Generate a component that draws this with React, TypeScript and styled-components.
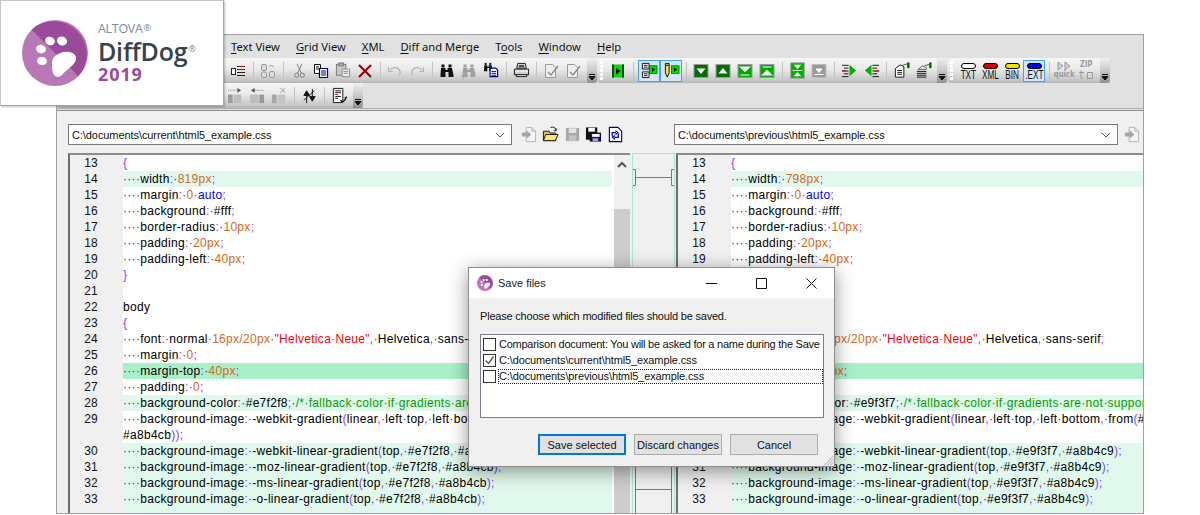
import { ReactNode } from 'react'
import styled, { createGlobalStyle } from 'styled-components'

const Global = createGlobalStyle`
  html, body {
    margin: 0;
    padding: 0;
    width: 1200px;
    height: 515px;
    overflow: hidden;
    background: #fff;
    font-family: 'Liberation Sans', Arial, sans-serif;
    font-size: 12px;
    color: #000;
  }
`

const Page = styled.div`
  position: relative;
  width: 1200px;
  height: 515px;
  padding: 34px 0 0 56px;
  box-sizing: border-box;
  overflow: hidden;
`

const AppWindow = styled.div`
  width: 1088px;
  height: 480px;
  box-sizing: border-box;
  border: 1px solid #a0a0a0;
  background: #e1e1e1;
  display: flex;
  flex-direction: column;
  overflow: hidden;
`

/* logo card */
const LogoCard = styled.div`
  position: absolute;
  left: 0;
  top: 0;
  width: 224px;
  height: 106px;
  box-sizing: border-box;
  background: #fff;
  border-right: 1px solid #a6a6a6;
  border-bottom: 1px solid #a6a6a6;
  border-top: 1px solid #c8c8c8;
  border-left: 1px solid #c8c8c8;
  box-shadow: 1px 1px 2px rgba(0, 0, 0, 0.25);
  display: flex;
  align-items: center;
  padding-left: 21px;
  gap: 10px;
  z-index: 5;
`

const LogoText = styled.div`
  display: flex;
  flex-direction: column;
  font-family: 'Open Sans', sans-serif;
  margin-top: -2px;
`

const Altova = styled.div`
  color: #7b89a8;
  font-size: 12.5px;
  line-height: 14px;
  letter-spacing: -0.3px;
  white-space: nowrap;
`

const DiffDogName = styled.div`
  color: #37424a;
  font-size: 25px;
  line-height: 30px;
  font-weight: 600;
  letter-spacing: -0.2px;
  white-space: nowrap;
`

const Reg = styled.span<{ $raise: number }>`
  font-size: 9px;
  font-weight: 400;
  color: #7c8790;
  line-height: 0;
  vertical-align: ${props => props.$raise}px;
  margin-left: 1px;
`

const LogoYear = styled.div`
  color: #9b4a9a;
  font-size: 18px;
  line-height: 16px;
  font-weight: 700;
  letter-spacing: 0.9px;
`

function PawMark ({ size }: { size: number }) {
  return (
    <svg width={size} height={size} viewBox='0 0 66 66'>
      <circle cx='33' cy='33' r='33' fill='#b878b5' />
      <path d='M9.7 9.7A33 33 0 0 1 56.3 56.3Z' fill='#9b4a9a' />
      <g fill='#fff'>
        <ellipse cx='28' cy='21' rx='5' ry='4.2' transform='rotate(25 28 21)' />
        <ellipse cx='40' cy='21' rx='5.2' ry='4.4' transform='rotate(25 40 21)' />
        <ellipse cx='19' cy='29' rx='5' ry='4.2' transform='rotate(15 19 29)' />
        <ellipse cx='20' cy='41' rx='5' ry='4' transform='rotate(10 20 41)' />
        <path d='M32 37C36 33 42 31 47 32C53 33 56 37 53 42C50 47 44 50 40 55C37 58 32 57 31 53C30 48 29 41 32 37Z' />
      </g>
    </svg>
  )
}

/* menu */
const MenuBar = styled.div`
  height: 23px;
  display: flex;
  align-items: center;
  gap: 16px;
  padding-left: 174px;
  font-family: 'Noto Sans', sans-serif;
  font-size: 11.2px;
  color: #111;
`

const MenuItem = styled.span`
  white-space: nowrap;
  u {
    text-underline-offset: 2px;
  }
`

/* toolbars */
const ToolRow = styled.div`
  height: 25px;
  display: flex;
`

const ToolBar = styled.div<{ $lead?: number }>`
  height: 25px;
  display: flex;
  align-items: center;
  box-sizing: border-box;
  padding-left: ${props => props.$lead ?? 0}px;
  background: linear-gradient(#f6f6f6, #e9e9e9 45%, #c4c4c4 92%, #b0b0b0);
  border-radius: 4px 0 0 4px;
`

const ToolBtn = styled.div<{ $active?: boolean }>`
  width: 22px;
  height: 22px;
  box-sizing: border-box;
  display: flex;
  align-items: center;
  justify-content: center;
  flex: none;
  border: 1px solid ${props => (props.$active ? '#4aa0f0' : 'transparent')};
  background: ${props => (props.$active ? '#d3e6f8' : 'transparent')};
`

const Sep = styled.div<{ $wide?: boolean }>`
  width: ${props => (props.$wide ? 9 : 8)}px;
  height: 17px;
  flex: none;
  display: flex;
  justify-content: center;
  &::before {
    content: '';
    width: 1px;
    background: #c2c2c2;
  }
`

const Grip = styled.div`
  width: 9px;
  height: 19px;
  flex: none;
  margin-left: 1px;
  background-image: radial-gradient(circle at 2.5px 1.5px, #fff 1.4px, transparent 1.6px);
  background-size: 5px 4px;
  background-repeat: repeat-y;
  background-position: 1px 0;
`

const TabEnd = styled.div`
  width: 10px;
  height: 25px;
  margin-left: 3px;
  flex: none;
  box-sizing: border-box;
  border-radius: 0 4px 4px 0;
  background: linear-gradient(#efefef, #c9c9c9 50%, #8e8e8e);
  display: flex;
  align-items: flex-end;
  justify-content: center;
  padding-bottom: 3px;
`

const ToolBottom = styled.div`
  flex: none;
  height: 1px;
  background: #e1e1e1;
  border-bottom: 1px solid #8c8c8c;
  border-top: 1px solid #b0b0b0;
`

const TypeBtn = styled(ToolBtn)`
  flex-direction: column;
  justify-content: flex-start;
  padding-top: 2px;
`

const Pill = styled.div<{ $color: string }>`
  width: 15px;
  height: 6px;
  flex: none;
  box-sizing: border-box;
  border: 1px solid #000;
  border-radius: 3px;
  background: ${props => props.$color};
`

const TypeLabel = styled.div`
  font-family: 'Liberation Sans', sans-serif;
  font-size: 12px;
  line-height: 12px;
  transform: scaleX(0.68);
  color: #111;
  white-space: nowrap;
`

const QuickBtn = styled(ToolBtn)`
  flex-direction: column;
  justify-content: flex-start;
`

const QuickLabel = styled.div`
  font-family: 'DejaVu Sans', sans-serif;
  font-weight: 700;
  font-size: 8px;
  line-height: 9px;
  margin-top: -1px;
  color: #9a9a9a;
  transform: scaleX(0.85);
`

/* path bar */
const PathBar = styled.div`
  flex: none;
  height: 42px;
  box-sizing: border-box;
  padding: 13px 0 0 11px;
  background: #f0f0f0;
  display: flex;
  align-items: flex-start;
`

const Combo = styled.div`
  width: 444px;
  height: 21px;
  box-sizing: border-box;
  flex: none;
  background: #fff;
  border: 1px solid #7a7a7a;
  display: flex;
  align-items: center;
  justify-content: space-between;
  padding: 0 6px 0 3px;
  font-size: 11px;
  letter-spacing: -0.08px;
  white-space: nowrap;
  color: #111;
`

const PathIcons = styled.div<{ $width: number, $pad: number }>`
  width: ${props => props.$width}px;
  flex: none;
  display: flex;
  padding-left: ${props => props.$pad}px;
  box-sizing: border-box;
`

const PathIcon = styled.div`
  width: 21.7px;
  height: 21px;
  flex: none;
  display: flex;
  align-items: center;
  justify-content: center;
`

/* editors */
const Editors = styled.div`
  flex: 1;
  min-height: 0;
  background: #f0f0f0;
  padding-left: 11px;
  display: flex;
`

const Pane = styled.div<{ $width: number }>`
  width: ${props => props.$width}px;
  flex: none;
  box-sizing: border-box;
  border-left: 2px solid #6e6e6e;
  border-top: 2px solid #8c8c8c;
  background: #fff;
  display: flex;
  overflow: hidden;
`

const Lines = styled.div`
  flex: 1;
  min-width: 0;
  display: flex;
  flex-direction: column;
`

const Row = styled.div`
  height: 16px;
  flex: none;
  display: flex;
  line-height: 17px;
  font-size: 12px;
`

const LineNo = styled.div`
  width: 53px;
  flex: none;
  box-sizing: border-box;
  padding-right: 11px;
  background: #f0f0f0;
  text-align: center;
  color: #111;
`

const Code = styled.div<{ $mark?: 'soft' | 'strong' }>`
  flex: 1;
  min-width: 0;
  white-space: pre;
  overflow: hidden;
  letter-spacing: 0.3px;
  background: ${props =>
    props.$mark === 'strong' ? '#a8f0ca' : props.$mark === 'soft' ? '#e1f8ec' : 'transparent'};
`

const Token = styled.span<{ $kind: string }>`
  color: ${props =>
    ({
      comment: '#00a000',
      str: '#ff0000',
      num: '#d2691e',
      kw: '#0000ff',
      punct: '#7f40ff',
      dot: '#444',
      plain: '#000'
    }[props.$kind])};
`

const ScrollBar = styled.div`
  width: 16px;
  flex: none;
  margin-left: 2px;
  background: #f0f0f0;
  display: flex;
  flex-direction: column;
  align-items: center;
`

const ScrollArrow = styled.div`
  height: 17px;
  display: flex;
  align-items: center;
  margin-top: 1px;
`

const ScrollThumb = styled.div`
  align-self: stretch;
  flex: 1;
  margin-top: 36px;
  background: #cdcdcd;
`

const SyncGap = styled.div`
  width: 46px;
  flex: none;
  display: flex;
  box-sizing: border-box;
  padding: 0 1px 0 2px;
`

const SyncInner = styled.div`
  flex: 1;
  border-left: 1px solid #a8e8c8;
  border-right: 1px solid #a8e8c8;
  border-top: 1px solid #a8e8c8;
  background: #f0f0f0;
`

/* save dialog */
const Dialog = styled.div`
  position: absolute;
  left: 468px;
  top: 267px;
  width: 367px;
  height: 200px;
  box-sizing: border-box;
  border: 1px solid #8f8f8f;
  background: #f0f0f0;
  box-shadow: 0 4px 18px rgba(0, 0, 0, 0.42);
  display: flex;
  flex-direction: column;
  z-index: 4;
  font-size: 11px;
`

const TitleBar = styled.div`
  height: 30px;
  flex: none;
  background: #fff;
  display: flex;
  align-items: center;
  padding-left: 8px;
  gap: 5px;
`

const TitleText = styled.span`
  flex: 1;
  color: #222;
`

const WinBtn = styled.div`
  width: 45px;
  height: 30px;
  flex: none;
  display: flex;
  align-items: center;
  justify-content: center;
`

const DialogBody = styled.div`
  flex: 1;
  padding: 10px 10px 0 11px;
  display: flex;
  flex-direction: column;
  position: relative;
`

const Prompt = styled.div`
  line-height: 16px;
  margin-bottom: 10px;
  letter-spacing: -0.2px;
  color: #111;
`

const FileList = styled.div`
  height: 84px;
  box-sizing: border-box;
  border: 1px solid #7a7f8c;
  background: #fff;
  padding: 1px 0 0 2px;
  display: flex;
  flex-direction: column;
  overflow: hidden;
`

const FileRow = styled.div`
  height: 16px;
  display: flex;
  align-items: center;
  gap: 2px;
  flex: none;
  margin-top: 0.3px;
`

const Check = styled.div`
  width: 13px;
  height: 13px;
  box-sizing: border-box;
  flex: none;
  border: 1px solid #333;
  background: #fff;
  display: flex;
  align-items: center;
  justify-content: center;
`

const FileName = styled.span<{ $focus?: boolean, $tight?: boolean }>`
  flex: 1;
  min-width: 0;
  height: 15px;
  line-height: 13px;
  letter-spacing: ${props => (props.$tight ? -0.25 : -0.12)}px;
  white-space: nowrap;
  overflow: hidden;
  box-sizing: border-box;
  border: 1px dotted ${props => (props.$focus ? '#222' : 'transparent')};
  color: #111;
`

const DialogActions = styled.div`
  display: flex;
  justify-content: flex-end;
  gap: 8px;
  margin-top: 16px;
  padding-right: 6px;
`

const DlgButton = styled.div<{ $primary?: boolean }>`
  width: 88px;
  height: 21px;
  box-sizing: border-box;
  border: ${props => (props.$primary ? '2px solid #0078d7' : '1px solid #adadad')};
  background: #e1e1e1;
  display: flex;
  align-items: center;
  justify-content: center;
  color: #111;
  white-space: nowrap;
`

const SizeGrip = styled.svg`
  position: absolute;
  right: 0;
  bottom: 0;
`

/* icons */
function Svg ({ children, size = 16 }: { children: ReactNode, size?: number }) {
  return <svg width={size} height={size} viewBox='0 0 16 16' fill='none'>{children}</svg>
}

function Svg18 ({ children }: { children: ReactNode }) {
  return <svg width={17} height={17} viewBox='0 0 18 18' fill='none'>{children}</svg>
}

const G = '#9a9a9a'
const D = '#222'

const GreenBox = ({ kind }: { kind: 'down' | 'up' | 'fdown' | 'fup' }) => (
  <Svg>
    <rect x='1' y='1.5' width='14' height='13' fill={kind === 'down' || kind === 'up' ? '#006f00' : '#00a800'} stroke='#9a9a9a' />
    {kind === 'down' && <path d='M3.5 5.5h9L8 11z' fill='#fff' />}
    {kind === 'up' && <path d='M3.5 10.5h9L8 5z' fill='#fff' />}
    {kind === 'fdown' && <path d='M3.5 4h9L8 8.5zM3.5 12h9' stroke='#fff' strokeWidth='1.2' fill='#fff' />}
    {kind === 'fup' && <path d='M3.5 12h9L8 7.5zM3.5 4h9' stroke='#fff' strokeWidth='1.2' fill='#fff' />}
  </Svg>
)

const PlayMini = ({ x = 8, y = 3 }: { x?: number, y?: number }) => (
  <g transform={`translate(${x} ${y})`}>
    <rect x='0' y='0' width='8' height='8' fill='#00e000' stroke='#004000' strokeWidth='0.7' />
    <path d='M2.5 1.5L6 4L2.5 6.5z' fill='#000' />
  </g>
)

const Binoc = ({ color = '#111' }: { color?: string }) => (
  <g fill={color}>
    <rect x='2.5' y='1.5' width='3' height='3' />
    <rect x='9.5' y='1.5' width='3' height='3' />
    <path d='M2 5h4.5v2h2V5H13l1.5 7v2h-5v-5h-3v5h-5v-2z' />
  </g>
)

const icons: Record<string, ReactNode> = {
  options: (
    <Svg>
      <rect x='1.5' y='5.5' width='4' height='6' stroke={D} fill='#fff' />
      <path d='M7 3.5h8M7 6.5h8M7 9.5h8M7 12.5h8' stroke={D} />
      <path d='M9 3.5h5M9 6.5h5' stroke='#d00000' />
    </Svg>
  ),
  compare: (
    <Svg>
      <rect x='1.5' y='1.5' width='5' height='6' rx='1.5' stroke={G} fill='#ddd' />
      <rect x='9.5' y='8.5' width='5' height='6' rx='1.5' stroke={G} fill='#ddd' />
      <rect x='1.5' y='9' width='5' height='5.5' rx='1.5' stroke={G} fill='#ddd' />
      <path d='M9 3.5c2-1.5 4-1 5 1' stroke={G} />
    </Svg>
  ),
  cut: (
    <Svg18>
      <circle cx='6' cy='14' r='2.2' stroke='#777' />
      <circle cx='12' cy='14' r='2.2' stroke='#777' />
      <path d='M7 12L11.500 2M11 12L6.500 2' stroke='#777' />
    </Svg18>
  ),
  copy: (
    <Svg>
      <path d='M1.5 1.5h6v9h-6z' fill='#fff' stroke='#111' />
      <path d='M3 4h3M3 6h3' stroke='#111' />
      <path d='M6.5 5.5h8v9h-8z' fill='#fff' stroke='#000080' strokeWidth='1.2' />
      <path d='M8 8h5M8 10h5M8 12h5' stroke='#000080' />
    </Svg>
  ),
  paste: (
    <Svg18>
      <rect x='1.5' y='2.5' width='10' height='11.5' fill='#c8c8c8' stroke='#777' />
      <rect x='4' y='1' width='5' height='3' fill='#aaa' stroke='#777' />
      <path d='M7.5 7.5h8v8h-8z' fill='#eee' stroke='#888' />
      <path d='M9 10h5M9 12h5' stroke='#888' />
    </Svg18>
  ),
  remove: (
    <Svg>
      <path d='M2 2L14 14M14 2L2 14' stroke='#a00000' strokeWidth='2.2' />
    </Svg>
  ),
  undo: (
    <Svg>
      <path d='M3 7c3-3.5 8-3 10 1 .5 1.5 0 3-1 4' stroke='#b5b5b5' strokeWidth='1.2' />
      <path d='M1.5 4v4.5H6' stroke='#b5b5b5' strokeWidth='1.2' />
    </Svg>
  ),
  redo: (
    <Svg>
      <path d='M13 7c-3-3.5-8-3-10 1-.5 1.5 0 3 1 4' stroke='#b5b5b5' strokeWidth='1.2' />
      <path d='M14.5 4v4.5H10' stroke='#b5b5b5' strokeWidth='1.2' />
    </Svg>
  ),
  find: <Svg><Binoc /></Svg>,
  findNext: (
    <Svg>
      <Binoc color='#a0a0a0' />
      <path d='M3 15c-1 0-2-1-2-3' stroke='#a0a0a0' />
    </Svg>
  ),
  findDoc: (
    <Svg18>
      <g transform='scale(.7)'><Binoc /></g>
      <path d='M7.5 6.5h6l2 2v7h-8z' fill='#fff' stroke='#000080' strokeWidth='1.2' />
      <path d='M9 10h5M9 12h5M9 14h5' stroke='#000080' />
    </Svg18>
  ),
  print: (
    <Svg18>
      <path d='M5 1.5h8l1 5H4z' fill='#fff' stroke='#111' />
      <path d='M6 3.5h6M6 5h6' stroke='#111' />
      <path d='M1.5 7.5h15v6h-15z' fill='#cfcfcf' stroke='#111' />
      <path d='M2 9.5h14' stroke='#fff' />
      <path d='M3.5 13.5h11v2h-11z' fill='#fff' stroke='#111' />
    </Svg18>
  ),
  docCheck: (
    <Svg>
      <path d='M2.5 1.5h7l3 3v10h-10z' fill='#eee' stroke={G} />
      <path d='M5 9l3 3 7-9' stroke='#8a8a8a' strokeWidth='1.4' />
    </Svg>
  ),
  play: (
    <Svg>
      <rect x='2' y='1.5' width='12' height='13' fill='#00e000' />
      <path d='M2 1.5h2v13H2zM12 1.5h2v13h-2z' fill='#005000' />
      <path d='M6 4.5L10.5 8L6 11.5z' fill='#000' />
    </Svg>
  ),
  docsPlay: (
    <Svg18>
      <path d='M1.5 1.5h7v6h-7zM1.5 10.5h7v6h-7z' fill='#fff' stroke='#111' />
      <path d='M3 3.5h4M3 5.5h4M3 12.5h4M3 14.5h4' stroke='#111' />
      <PlayMini x={9} y={4} />
    </Svg18>
  ),
  penPlay: (
    <Svg18>
      <path d='M2.5 1.5h4v10L4.5 16l-2-4.5z' fill='#ffd84a' stroke='#111' />
      <path d='M2.5 3.5h4' stroke='#111' />
      <PlayMini x={9} y={4} />
    </Svg18>
  ),
  down: <GreenBox kind='down' />,
  up: <GreenBox kind='up' />,
  fdown: <GreenBox kind='fdown' />,
  fup: <GreenBox kind='fup' />,
  group: (
    <Svg18>
      <rect x='2' y='1' width='14' height='16' fill='#00b000' stroke='#8a8a8a' />
      <path d='M5 3h8L9 7.5zM5 15h8L9 10.5z' fill='#fff' />
      <path d='M4 9h10' stroke='#fff' />
    </Svg18>
  ),
  groupOff: (
    <Svg>
      <rect x='1' y='1.5' width='14' height='13' fill='#9a9a9a' stroke='#bbb' />
      <path d='M3.5 11.5h9M5 6h6L8 9.5z' stroke='#fff' fill='#fff' />
    </Svg>
  ),
  pushRight: (
    <Svg18>
      <path d='M1 3.5h7M3 6.5h5M1 9.5h7M3 12.5h5M1 15.5h7' stroke='#111' />
      <path d='M1 9.5h5' stroke='#d00000' />
      <path d='M9 3l7 6-7 6z' fill='#00b000' />
    </Svg18>
  ),
  pushLeft: (
    <Svg18>
      <path d='M10 3.5h7M10 6.5h5M10 9.5h7M10 12.5h5M10 15.5h7' stroke='#111' />
      <path d='M12 9.5h5' stroke='#d00000' />
      <path d='M9 3L2 9l7 6z' fill='#00b000' />
    </Svg18>
  ),
  clipFlag: (
    <Svg18>
      <path d='M2.5 7l5-4 4 2v11h-9z' fill='#fff' stroke='#111' />
      <path d='M4.5 9h5M4.5 11h5M4.5 13h5' stroke='#111' />
      <path d='M10 3.5l5-1.5' stroke='#555' />
      <rect x='15' y='0.5' width='2.5' height='6' fill='#006000' />
    </Svg18>
  ),
  listFlag: (
    <Svg18>
      <path d='M2 10h10M2 12h10M2 14h10M2 16h10' stroke='#111' />
      <path d='M3 8l5-4 4 2v2z' fill='#ddd' stroke='#666' />
      <path d='M10 4l5-1.5' stroke='#555' />
      <rect x='15' y='0.5' width='2.5' height='6' fill='#006000' />
    </Svg18>
  ),
  moveRight: (
    <Svg18>
      <path d='M1 3.5h10' stroke='#777' strokeDasharray='1 1' />
      <path d='M11 1l4 2.5L11 6z' fill='#555' />
      <rect x='1' y='8' width='5' height='9' fill='#9a9a9a' />
      <rect x='7' y='8' width='8' height='9' fill='#bdbdbd' />
    </Svg18>
  ),
  moveLeft: (
    <Svg18>
      <path d='M6 3.5h10' stroke='#777' strokeDasharray='1 1' />
      <path d='M6 1L2 3.5 6 6z' fill='#555' />
      <rect x='1' y='8' width='9' height='9' fill='#bdbdbd' />
      <rect x='11' y='8' width='5' height='9' fill='#9a9a9a' />
    </Svg18>
  ),
  moveOff: (
    <Svg18>
      <path d='M10 1l5 5M15 1l-5 5' stroke='#999' />
      <rect x='1' y='8' width='5' height='9' fill='#a8a8a8' />
      <rect x='7' y='8' width='8' height='9' fill='#c4c4c4' />
    </Svg18>
  ),
  swap: (
    <Svg18>
      <path d='M6 17V8M3 9l3-5 3 5z' fill='#111' stroke='#111' />
      <path d='M12 2v9M9 10l3 5 3-5z' fill='#111' stroke='#111' />
      <path d='M3 14L14 4' stroke='#111' />
    </Svg18>
  ),
  report: (
    <Svg18>
      <path d='M2.5 1.5h10v15h-10z' fill='#fff' stroke='#111' />
      <path d='M4.5 4h6M4.5 6h6M4.5 10h6M4.5 12h3' stroke='#111' />
      <path d='M4.5 8h3' stroke='#d00000' />
      <path d='M10 14c2 3 5 1 6-3l-1.5 1' stroke='#111' strokeWidth='1.4' />
    </Svg18>
  ),
  pullDoc: (
    <Svg18>
      <path d='M6.5 1.5h6l4 4v11h-10z' fill='#f4f4f4' stroke='#b4b4b4' />
      <path d='M12.500 1.500v4h4' stroke='#b4b4b4' />
      <path d='M2 7h5V4.500L12 9l-5 4.500V11H2z' fill='#a6a6a6' />
    </Svg18>
  ),
  open: (
    <Svg18>
      <path d='M1.5 5.5h6l1 2h6v8h-13z' fill='#e0c040' stroke='#111' />
      <path d='M4 9h13l-3 6.5H1.5z' fill='#ffe870' stroke='#111' />
      <path d='M9 1.5c3-1 5 0 6 3M15 2.5v2.500h-2.500' stroke='#111' />
    </Svg18>
  ),
  save: (
    <Svg18>
      <path d='M2 2h14v14H2z' fill='#a8a8a8' />
      <rect x='5' y='2.500' width='8' height='5' fill='#e4e4e4' />
      <rect x='5' y='10' width='8' height='6' fill='#c4c4c4' />
    </Svg18>
  ),
  saveAll: (
    <Svg18>
      <path d='M1 1.500h12v13H1z' fill='#111' />
      <rect x='3.500' y='2' width='7' height='4' fill='#fff' />
      <path d='M5 7h12v9.500H5z' fill='#111' />
      <rect x='7' y='8' width='9' height='4' fill='#fff' stroke='#000080' />
      <rect x='8' y='13' width='6' height='3' fill='#a0a0ff' />
    </Svg18>
  ),
  reload: (
    <Svg18>
      <path d='M2.500 1.500h9l4 4v11h-13z' fill='#fff' stroke='#000080' strokeWidth='1.2' />
      <path d='M5.500 11V7h4M9 5l2.500 2L9 9M12 8v4H8M8.500 14L6 12l2.500-2' stroke='#0000d0' strokeWidth='1.300' />
    </Svg18>
  )
}

function Btn ({ name, active }: { name: string, active?: boolean }) {
  return <ToolBtn $active={active}>{icons[name]}</ToolBtn>
}

function Tab () {
  return (
    <TabEnd>
      <svg width='8' height='6' viewBox='0 0 8 6'>
        <path d='M1 0.500h6M1 2.500h6L4 6z' stroke='#111' fill='#111' strokeWidth='1' />
      </svg>
    </TabEnd>
  )
}

function TypeButton ({ color, label, active }: { color: string, label: string, active?: boolean }) {
  return (
    <TypeBtn $active={active}>
      <Pill $color={color} />
      <TypeLabel>{label}</TypeLabel>
    </TypeBtn>
  )
}

function ComboArrow () {
  return <svg width='10' height='6' viewBox='0 0 10 6' fill='none' stroke='#555'><path d='M1 1l4 4 4-4' /></svg>
}

/* code */
const tokenRe = /(\/\*.*$)|("[^"]*")|(\d+px(?:\/\d+px)?|\b0\b)|(\bauto\b)|([:;,(){}])|(·)/g

function CodeLine ({ text }: { text: string }) {
  const parts: ReactNode[] = []
  let last = 0
  for (const m of text.matchAll(tokenRe)) {
    const i = m.index ?? 0
    if (i > last) parts.push(<Token key={last} $kind='plain'>{text.slice(last, i)}</Token>)
    const kind = m[1] ? 'comment' : m[2] ? 'str' : m[3] ? 'num' : m[4] ? 'kw' : m[5] ? 'punct' : 'dot'
    parts.push(<Token key={i} $kind={kind}>{m[0]}</Token>)
    last = i + m[0].length
  }
  if (last < text.length) parts.push(<Token key={last} $kind='plain'>{text.slice(last)}</Token>)
  return <>{parts}</>
}

type Line = { no: string, text: string, mark?: 'soft' | 'strong' }

function makeLines (width: string, light: string, dark: string): Line[] {
  return [
    { no: '13', text: '{' },
    { no: '14', text: `····width:·${width}px;`, mark: 'soft' },
    { no: '15', text: '····margin:·0·auto;' },
    { no: '16', text: '····background:·#fff;' },
    { no: '17', text: '····border-radius:·10px;' },
    { no: '18', text: '····padding:·20px;' },
    { no: '19', text: '····padding-left:·40px;' },
    { no: '20', text: '}' },
    { no: '21', text: '' },
    { no: '22', text: 'body' },
    { no: '23', text: '{' },
    { no: '24', text: '····font:·normal·16px/20px·"Helvetica·Neue",·Helvetica,·sans-serif;' },
    { no: '25', text: '····margin:·0;' },
    { no: '26', text: '····margin-top:·40px;', mark: 'strong' },
    { no: '27', text: '····padding:·0;' },
    { no: '28', text: `····background-color:·${light};·/*·fallback·color·if·gradients·are·not·supported·*/`, mark: 'soft' },
    { no: '29', text: `····background-image:·-webkit-gradient(linear,·left·top,·left·bottom,·from(${light}),·to(` },
    { no: '', text: `${dark}));` },
    { no: '30', text: `····background-image:·-webkit-linear-gradient(top,·${light},·${dark});`, mark: 'soft' },
    { no: '31', text: `····background-image:·-moz-linear-gradient(top,·${light},·${dark});`, mark: 'soft' },
    { no: '32', text: `····background-image:·-ms-linear-gradient(top,·${light},·${dark});`, mark: 'soft' },
    { no: '33', text: `····background-image:·-o-linear-gradient(top,·${light},·${dark});`, mark: 'soft' },
    { no: '', text: '', mark: 'soft' }
  ]
}

function CodeLines ({ lines }: { lines: Line[] }) {
  return (
    <Lines>
      {lines.map((l, i) => (
        <Row key={i}>
          <LineNo>{l.no}</LineNo>
          <Code $mark={l.mark}><CodeLine text={l.text} /></Code>
        </Row>
      ))}
    </Lines>
  )
}

function SyncLinks () {
  return (
    <svg width='41' height='360' viewBox='0 0 41 360' fill='none' stroke='#7a7a7a'>
      <path d='M0 15.500h2.500v16H0M2.500 23.500H38.500M41 15.500h-2.500v16H41' />
      <path d='M2.500 289V360M38.500 289V360M2.500 335.500H38.500M2.500 289.500H38.500' />
    </svg>
  )
}

function App () {
  return (
    <Page>
      <Global />
      <AppWindow>
        <MenuBar>
          <MenuItem><u>T</u>ext View</MenuItem>
          <MenuItem><u>G</u>rid View</MenuItem>
          <MenuItem><u>X</u>ML</MenuItem>
          <MenuItem><u>D</u>iff and Merge</MenuItem>
          <MenuItem>T<u>o</u>ols</MenuItem>
          <MenuItem><u>W</u>indow</MenuItem>
          <MenuItem><u>H</u>elp</MenuItem>
        </MenuBar>
        <ToolRow>
          <ToolBar $lead={170}>
            <Btn name='options' /><Sep />
            <Btn name='compare' /><Sep $wide />
            <Btn name='cut' /><Btn name='copy' /><Btn name='paste' /><Btn name='remove' /><Sep />
            <Btn name='undo' /><Btn name='redo' /><Sep />
            <Btn name='find' /><Btn name='findNext' /><Btn name='findDoc' /><Sep />
            <Btn name='print' /><Sep />
            <Btn name='docCheck' /><Btn name='docCheck' />
            <Tab />
          </ToolBar>
          <ToolBar>
            <Grip />
            <Btn name='play' /><Sep $wide />
            <Btn name='docsPlay' active /><Btn name='penPlay' active /><Sep />
            <Btn name='down' /><Btn name='up' /><Btn name='fdown' /><Btn name='fup' /><Sep />
            <Btn name='group' /><Btn name='groupOff' /><Sep />
            <Btn name='pushRight' /><Btn name='pushLeft' /><Sep />
            <Btn name='clipFlag' /><Btn name='listFlag' />
            <Tab />
          </ToolBar>
          <ToolBar>
            <Grip />
            <TypeButton color='#fff' label='TXT' />
            <TypeButton color='#e00000' label='XML' />
            <TypeButton color='#f0e000' label='BIN' />
            <TypeButton color='#0000e0' label='.EXT' active />
            <Sep />
            <QuickBtn>
              <svg width='16' height='10' viewBox='0 0 16 10'>
                <path d='M2 1l5 4-5 4zM9 1l5 4-5 4z' fill='#d0d0d0' stroke='#9a9a9a' />
              </svg>
              <QuickLabel>quick</QuickLabel>
            </QuickBtn>
            <QuickBtn>
              <QuickLabel>ZIP</QuickLabel>
              <svg width='16' height='11' viewBox='0 0 16 11' fill='none' stroke='#9a9a9a'>
                <path d='M1 3.500h5M3 1.500v7c0 1 1 1 2 1M9.500 3.500h5v6h-5z' />
              </svg>
            </QuickBtn>
            <Tab />
          </ToolBar>
        </ToolRow>
        <ToolRow>
          <ToolBar $lead={167}>
            <Btn name='moveRight' /><Btn name='moveLeft' /><Btn name='moveOff' /><Sep />
            <Btn name='swap' /><Sep />
            <Btn name='report' />
            <Tab />
          </ToolBar>
        </ToolRow>
        <ToolBottom />
        <PathBar>
          <Combo>
            C:\documents\current\html5_example.css
            <ComboArrow />
          </Combo>
          <PathIcons $width={162} $pad={6}>
            <PathIcon>{icons.pullDoc}</PathIcon>
            <PathIcon>{icons.open}</PathIcon>
            <PathIcon>{icons.save}</PathIcon>
            <PathIcon>{icons.saveAll}</PathIcon>
            <PathIcon>{icons.reload}</PathIcon>
          </PathIcons>
          <Combo>
            C:\documents\previous\html5_example.css
            <ComboArrow />
          </Combo>
          <PathIcons $width={25} $pad={3}>
            <PathIcon>{icons.pullDoc}</PathIcon>
          </PathIcons>
        </PathBar>
        <Editors>
          <Pane $width={562}>
            <CodeLines lines={makeLines('819', '#e7f2f8', '#a8b4cb')} />
            <ScrollBar>
              <ScrollArrow>
                <svg width='10' height='7' viewBox='0 0 10 7' fill='none' stroke='#555' strokeWidth='2'><path d='M1 6l4-4 4 4' /></svg>
              </ScrollArrow>
              <ScrollThumb />
            </ScrollBar>
          </Pane>
          <SyncGap>
            <SyncInner><SyncLinks /></SyncInner>
          </SyncGap>
          <Pane $width={467}>
            <CodeLines lines={makeLines('798', '#e9f3f7', '#a8b4c9')} />
          </Pane>
        </Editors>
      </AppWindow>
      <LogoCard>
        <PawMark size={66} />
        <LogoText>
          <Altova>ALTOVA<Reg $raise={2}>®</Reg></Altova>
          <DiffDogName>DiffDog<Reg $raise={9}>®</Reg></DiffDogName>
          <LogoYear>2019</LogoYear>
        </LogoText>
      </LogoCard>
      <Dialog>
        <TitleBar>
          <PawMark size={16} />
          <TitleText>Save files</TitleText>
          <WinBtn><svg width='11' height='11' viewBox='0 0 11 11' stroke='#111' fill='none'><path d='M0 5.500h11' /></svg></WinBtn>
          <WinBtn><svg width='11' height='11' viewBox='0 0 11 11' stroke='#111' fill='none'><path d='M.5.500h10v10H.5z' /></svg></WinBtn>
          <WinBtn><svg width='11' height='11' viewBox='0 0 11 11' stroke='#111' fill='none'><path d='M.5.500l10 10M10.500.500l-10 10' /></svg></WinBtn>
        </TitleBar>
        <DialogBody>
          <Prompt>Please choose which modified files should be saved.</Prompt>
          <FileList>
            <FileRow>
              <Check />
              <FileName $tight>Comparison document: You will be asked for a name during the Save</FileName>
            </FileRow>
            <FileRow>
              <Check>
                <svg width='11' height='11' viewBox='0 0 11 11' fill='none' stroke='#555' strokeWidth='1.4'><path d='M1.500 5.500l3 3 5-7' /></svg>
              </Check>
              <FileName>C:\documents\current\html5_example.css</FileName>
            </FileRow>
            <FileRow>
              <Check />
              <FileName $focus>C:\documents\previous\html5_example.css</FileName>
            </FileRow>
          </FileList>
          <DialogActions>
            <DlgButton $primary>Save selected</DlgButton>
            <DlgButton>Discard changes</DlgButton>
            <DlgButton>Cancel</DlgButton>
          </DialogActions>
          <SizeGrip width='11' height='11' viewBox='0 0 11 11' fill='none' stroke='#a8a8a8'>
            <path d='M1 10.500L10.500 1M4 10.500L10.500 4M7 10.500L10.500 7' />
          </SizeGrip>
        </DialogBody>
      </Dialog>
    </Page>
  )
}

export default App
